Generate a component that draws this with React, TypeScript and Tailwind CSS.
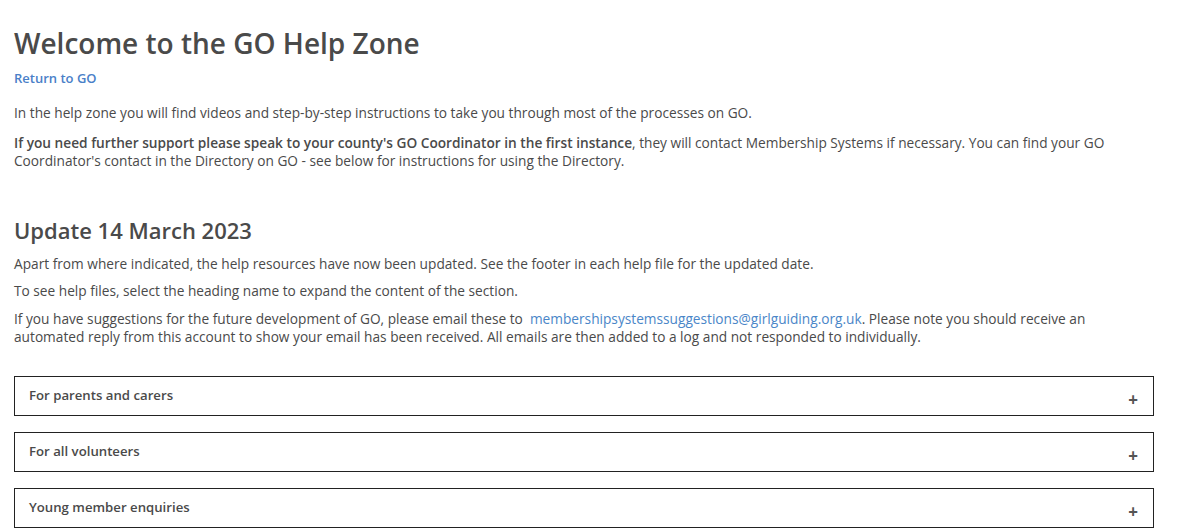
import React from "react";

const font = { fontFamily: '"Open Sans", "Noto Sans", sans-serif' };

function Panel({ title }: { title: string }) {
  return (
    <div className="border border-[#222222] h-[40px] flex items-start justify-between pl-[14px] pr-[15px]">
      <span className="text-[13.2px] font-semibold text-[#4a4a4a] mt-[9px] leading-[18px]">{title}</span>
      <span className="text-[17px] font-bold text-[#555555] mt-[14px] leading-[18px]">+</span>
    </div>
  );
}

export default function App() {
  return (
    <div className="bg-white min-h-screen text-[#4a4a4a] px-[14px] pt-[23px]" style={font}>
      <div className="w-[1140px]">
        <h1 className="text-[28px] font-semibold text-[#4a4a4a] leading-[40px]">Welcome to the GO Help Zone</h1>
        <a className="block mt-[5px] text-[13px] font-semibold text-[#4a80c8] leading-[20px]">Return to GO</a>
        <p className="mt-[16px] text-[13.7px] leading-[18px]">
          In the help zone you will find videos and step-by-step instructions to take you through most of the processes on GO.
        </p>
        <p className="mt-[12px] text-[13.7px] leading-[18px]">
          <b className="font-semibold">If you need further support please speak to your county's GO Coordinator in the first instance</b>, they will contact Membership Systems if necessary. You can find your GO Coordinator's contact in the Directory on GO - see below for instructions for using the Directory.
        </p>
        <h2 className="mt-[44px] text-[22px] font-semibold text-[#4a4a4a] leading-[32px]">Update 14 March 2023</h2>
        <p className="mt-[9px] text-[13.7px] leading-[18px]">
          Apart from where indicated, the help resources have now been updated. See the footer in each help file for the updated date.
        </p>
        <p className="mt-[9px] text-[13.7px] leading-[18px]">
          To see help files, select the heading name to expand the content of the section.
        </p>
        <p className="mt-[10px] text-[13.7px] leading-[18px]">
          If you have suggestions for the future development of GO, please email these to&nbsp; <a className="text-[#4a86c8]">membershipsystemssuggestions@girlguiding.org.uk</a>. Please note you should receive an automated reply from this account to show your email has been received. All emails are then added to a log and not responded to individually.
        </p>
        <div className="mt-[30px] flex flex-col gap-[16px]">
          <Panel title="For parents and carers" />
          <Panel title="For all volunteers" />
          <Panel title="Young member enquiries" />
        </div>
      </div>
    </div>
  );
}
